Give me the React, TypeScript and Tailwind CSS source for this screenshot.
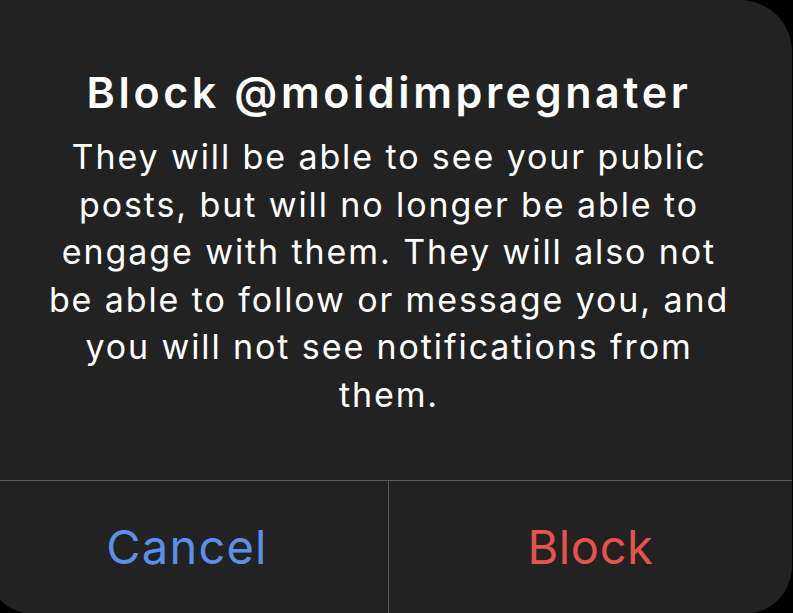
export default function App() {
  const lines = [
    "They will be able to see your public",
    "posts, but will no longer be able to",
    "engage with them. They will also not",
    "be able to follow or message you, and",
    "you will not see notifications from",
    "them.",
  ];

  return (
    <div className="h-[613px] w-[793px] overflow-hidden bg-black font-['Inter','Liberation_Sans',sans-serif]">
      <div className="ml-[-14px] flex h-[614px] w-[806px] flex-col rounded-tr-[52px] rounded-b-[48px] bg-[#222222] text-white">
        <div className="flex h-[480px] flex-col items-center pt-[66px]">
          <h1 className="text-[43px] leading-[52px] font-semibold tracking-[3.6px]">
            Block @moidimpregnater
          </h1>
          <p className="mt-[15px] text-center text-[34px] leading-[47.6px] tracking-[1.9px]">
            {lines.map((l) => (
              <span key={l} className="block">
                {l}
              </span>
            ))}
          </p>
        </div>
        <div className="flex flex-1 border-t border-[#5c5c5c]">
          <button className="flex flex-1 items-center justify-center text-[47px] tracking-[1.2px] text-[#5b8fea]">
            Cancel
          </button>
          <div className="w-px bg-[#5c5c5c]" />
          <button className="flex w-[403px] items-center justify-center text-[47px] tracking-[0.6px] text-[#e5534b]">
            Block
          </button>
        </div>
      </div>
    </div>
  );
}
